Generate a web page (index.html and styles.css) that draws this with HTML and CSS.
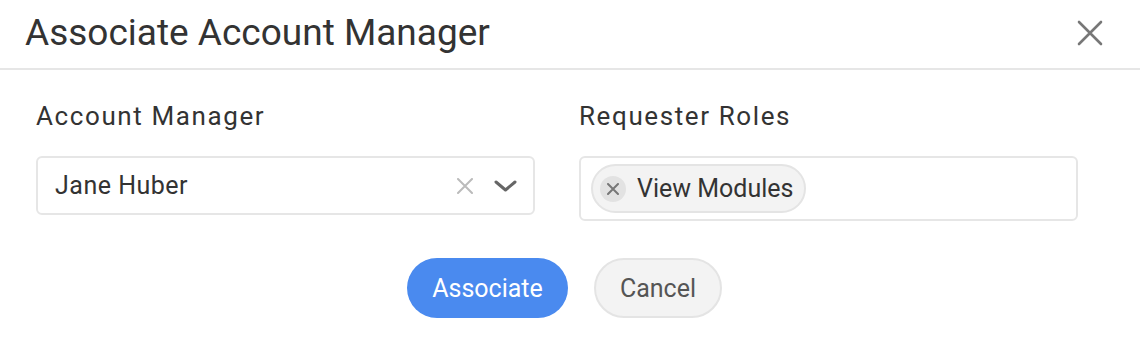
FILE: index.html
```html
<!DOCTYPE html>
<html lang="en">
<head>
<meta charset="utf-8">
<title>Associate Account Manager</title>
<link rel="stylesheet" href="styles.css">
</head>
<body>
<div class="dialog">
  <div class="header">
    <h1 class="title">Associate Account Manager</h1>
    <button class="close" aria-label="Close">
      <svg width="26" height="26" viewBox="0 0 26 26"><path d="M2 2L24 24M24 2L2 24" stroke="#777" stroke-width="2.6" stroke-linecap="round" fill="none"/></svg>
    </button>
  </div>
  <div class="content">
    <div class="field">
      <div class="label">Account Manager</div>
      <div class="select">
        <span class="value">Jane Huber</span>
        <span class="icons">
          <svg class="clear" width="16" height="16" viewBox="0 0 16 16"><path d="M1 1L15 15M15 1L1 15" stroke="#bbb" stroke-width="2" stroke-linecap="round" fill="none"/></svg>
          <svg class="chev" width="23" height="12" viewBox="0 0 23 12"><path d="M2 2L11.5 10L21 2" stroke="#666" stroke-width="3" stroke-linecap="round" stroke-linejoin="round" fill="none"/></svg>
        </span>
      </div>
    </div>
    <div class="field">
      <div class="label">Requester Roles</div>
      <div class="multi">
        <span class="chip">
          <span class="chip-x"><svg width="12" height="12" viewBox="0 0 12 12"><path d="M1 1L11 11M11 1L1 11" stroke="#777" stroke-width="2" stroke-linecap="round" fill="none"/></svg></span>
          <span class="chip-text">View Modules</span>
        </span>
      </div>
    </div>
  </div>
  <div class="actions">
    <button class="btn primary">Associate</button>
    <button class="btn secondary">Cancel</button>
  </div>
</div>
</body>
</html>
```

FILE: styles.css
```css
* { box-sizing: border-box; }
html, body { margin: 0; padding: 0; background: #fff; }
body {
  font-family: Roboto, "Noto Sans", Arial, sans-serif;
  color: #333;
  width: 1140px;
  height: 358px;
  overflow: hidden;
}
.header {
  height: 70px;
  display: flex;
  align-items: center;
  justify-content: space-between;
  padding: 0 37px 2px 25px;
  border-bottom: 2px solid #e6e6e6;
}
.title {
  margin: 0;
  font-weight: 400;
  font-size: 37px;
  line-height: 44px;
  color: #333;
}
.close {
  border: 0;
  background: none;
  padding: 0;
  width: 26px;
  height: 26px;
  display: flex;
}
.content {
  display: grid;
  grid-template-columns: 499px 499px;
  column-gap: 44px;
  align-items: start;
  padding: 30px 0 0 36px;
}
.label {
  font-size: 26px;
  line-height: 32px;
  letter-spacing: 1.6px;
  margin-bottom: 24px;
  color: #333;
}
.select {
  height: 59px;
  border: 2px solid #e6e6e6;
  border-radius: 6px;
  display: flex;
  align-items: center;
  justify-content: space-between;
  padding: 0 16px 0 17px;
}
.value { font-size: 25px; letter-spacing: 0.5px; color: #333; }
.icons { display: flex; align-items: center; gap: 21px; }
.multi {
  border: 2px solid #e6e6e6;
  border-radius: 6px;
  padding: 6px 10px;
  display: flex;
}
.chip {
  height: 49px;
  display: inline-flex;
  align-items: center;
  background: #f3f3f3;
  border: 2px solid #e4e4e4;
  border-radius: 25px;
  padding: 0 11px 0 7px;
}
.chip-x {
  width: 26px;
  height: 26px;
  border-radius: 50%;
  background: #e2e2e2;
  display: flex;
  align-items: center;
  justify-content: center;
  margin-right: 11px;
}
.chip-text { font-size: 25px; color: #333; }
.actions {
  display: flex;
  justify-content: center;
  gap: 26px;
  padding: 37px 11px 0 0;
}
.btn {
  height: 60px;
  border-radius: 30px;
  font-family: inherit;
  font-size: 25px;
  padding: 0 22px;
  cursor: pointer;
}
.primary {
  background: #4a8aef;
  border: 0;
  color: #fff;
  width: 161px;
}
.secondary {
  background: #f3f3f3;
  border: 2px solid #e4e4e4;
  color: #555;
  width: 128px;
}
```
